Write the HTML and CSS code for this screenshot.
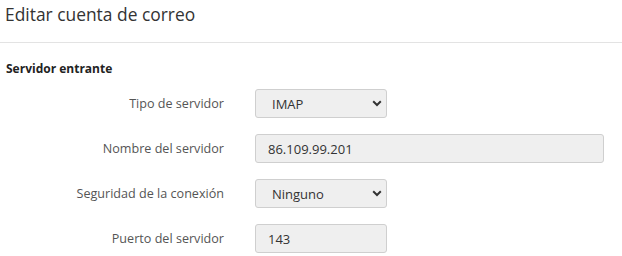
FILE: index.html
```html
<!DOCTYPE html>
<html lang="es">
<head>
<meta charset="utf-8">
<title>Editar cuenta de correo</title>
<link rel="stylesheet" href="styles.css">
</head>
<body>
<div class="page">
  <header class="head">
    <h1 class="title">Editar cuenta de correo</h1>
  </header>
  <section class="section">
    <h2 class="section-title">Servidor entrante</h2>
    <div class="form">
      <label class="label" for="tipo">Tipo de servidor</label>
      <div class="field">
        <span class="select-wrap">
          <select id="tipo" class="select"><option>IMAP</option><option>POP3</option></select>
          <svg class="chev" width="10" height="7" viewBox="0 0 10 7"><path d="M1.2 1.3 L5 5 L8.8 1.3" fill="none" stroke="#333" stroke-width="2"/></svg>
        </span>
      </div>
      <label class="label" for="nombre">Nombre del servidor</label>
      <div class="field">
        <input id="nombre" class="input input-wide" type="text" value="86.109.99.201" readonly>
      </div>
      <label class="label" for="seg">Seguridad de la conexión</label>
      <div class="field">
        <span class="select-wrap">
          <select id="seg" class="select"><option>Ninguno</option><option>SSL</option><option>TLS</option></select>
          <svg class="chev" width="10" height="7" viewBox="0 0 10 7"><path d="M1.2 1.3 L5 5 L8.8 1.3" fill="none" stroke="#333" stroke-width="2"/></svg>
        </span>
      </div>
      <label class="label" for="puerto">Puerto del servidor</label>
      <div class="field">
        <input id="puerto" class="input input-short" type="text" value="143" readonly>
      </div>
    </div>
  </section>
</div>
</body>
</html>
```
FILE: styles.css
```css
html, body {
  margin: 0;
  padding: 0;
  background: #fff;
}
body {
  font-family: "Open Sans", "Noto Sans", sans-serif;
  color: #333;
}
.head {
  height: 42px;
  border-bottom: 1px solid #e3e3e3;
  box-sizing: content-box;
}
.title {
  margin: 0;
  padding: 2px 0 0 5px;
  font-size: 17.4px;
  line-height: 24px;
  font-weight: 400;
  color: #333;
}
.section {
  padding: 17px 0 0 6px;
}
.section-title {
  margin: 0;
  font-size: 12px;
  line-height: 18px;
  font-weight: 700;
  color: #222;
}
.form {
  display: grid;
  grid-template-columns: 218px 350px;
  column-gap: 31px;
  row-gap: 16px;
  margin-top: 11px;
  align-items: center;
}
.label {
  text-align: right;
  font-size: 12.6px;
  color: #555;
}
.field {
  display: flex;
}
.select-wrap {
  position: relative;
  display: inline-flex;
}
.select, .input {
  box-sizing: border-box;
  height: 29px;
  border: 1px solid #cfcfcf;
  border-radius: 3px;
  background: #efefef;
  font-family: inherit;
  font-size: 13px;
  color: #333;
  margin: 0;
}
.select {
  -webkit-appearance: none;
  appearance: none;
  width: 132px;
  padding: 0 0 0 16px;
}
.chev {
  position: absolute;
  right: 5px;
  top: 11px;
  pointer-events: none;
}
.input {
  padding: 0 0 0 12px;
  outline: none;
}
.input-wide {
  width: 349px;
}
.input-short {
  width: 132px;
}
```
